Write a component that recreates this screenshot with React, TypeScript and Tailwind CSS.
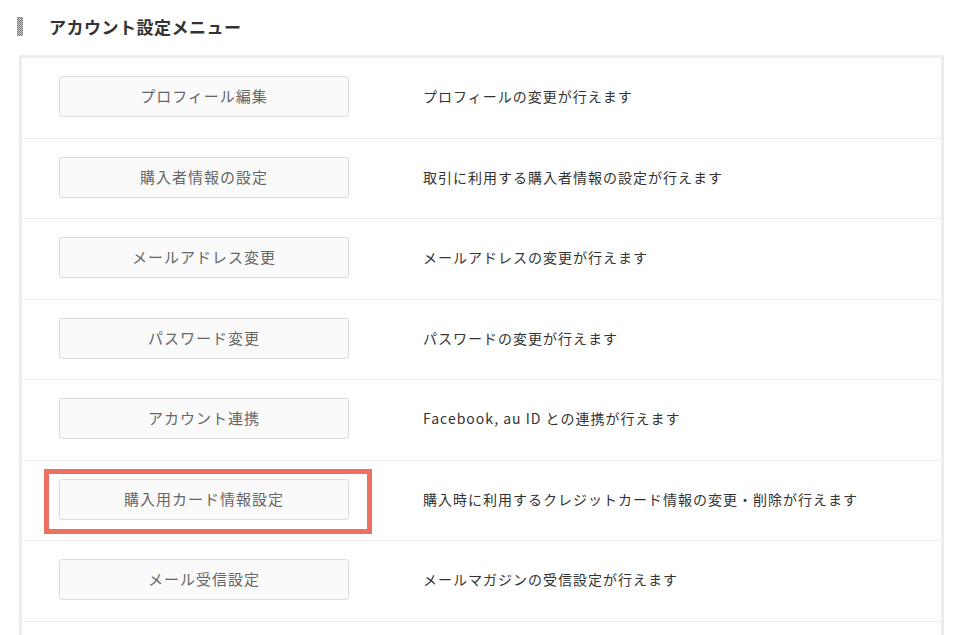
import React from "react";

const rows: { label: string; desc: string; hl?: boolean }[] = [
  { label: "プロフィール編集", desc: "プロフィールの変更が行えます" },
  { label: "購入者情報の設定", desc: "取引に利用する購入者情報の設定が行えます" },
  { label: "メールアドレス変更", desc: "メールアドレスの変更が行えます" },
  { label: "パスワード変更", desc: "パスワードの変更が行えます" },
  { label: "アカウント連携", desc: "Facebook, au ID との連携が行えます" },
  { label: "購入用カード情報設定", desc: "購入時に利用するクレジットカード情報の変更・削除が行えます", hl: true },
  { label: "メール受信設定", desc: "メールマガジンの受信設定が行えます" },
];

export default function App() {
  return (
    <div
      className="min-h-screen bg-white pl-[17px] pr-[25px] pt-[17px]"
      style={{ fontFamily: '"Noto Sans CJK JP", "Noto Sans", sans-serif' }}
    >
      <div className="flex h-[19px] items-center">
        <svg width="6" height="19" className="shrink-0">
          <defs>
            <pattern id="chk" width="2" height="2" patternUnits="userSpaceOnUse">
              <rect width="2" height="2" fill="#c4c4c4" />
              <rect width="1" height="1" fill="#7f7f7f" />
              <rect x="1" y="1" width="1" height="1" fill="#7f7f7f" />
            </pattern>
          </defs>
          <rect width="6" height="19" fill="url(#chk)" />
        </svg>
        <h2 className="ml-[26px] text-[17px] font-bold leading-none tracking-[0.5px] text-[#333]">
          アカウント設定メニュー
        </h2>
      </div>
      <div className="ml-[2px] mt-[19px] border-[3px] border-b-0 border-[#ededed] bg-white">
        {rows.map((r) => (
          <div
            key={r.label}
            className="flex items-center border-b border-dotted border-[#dcdcdc] pb-[20.5px] pl-[37px] pt-[18px]"
          >
            <div className="relative shrink-0">
              <div className="flex h-[41px] w-[290px] items-center justify-center rounded-[3px] border border-[#dcdcdc] bg-[#fafafa] text-[15px] tracking-[1px] text-[#666]">
                {r.label}
              </div>
              {r.hl && (
                <div className="pointer-events-none absolute -left-[15px] -top-[10px] h-[65px] w-[328px] border-[5px] border-[#ec6f61]" />
              )}
            </div>
            <div className="ml-[74px] text-[14px] tracking-[1px] text-[#333]">{r.desc}</div>
          </div>
        ))}
        <div className="h-[40px]" />
      </div>
    </div>
  );
}
